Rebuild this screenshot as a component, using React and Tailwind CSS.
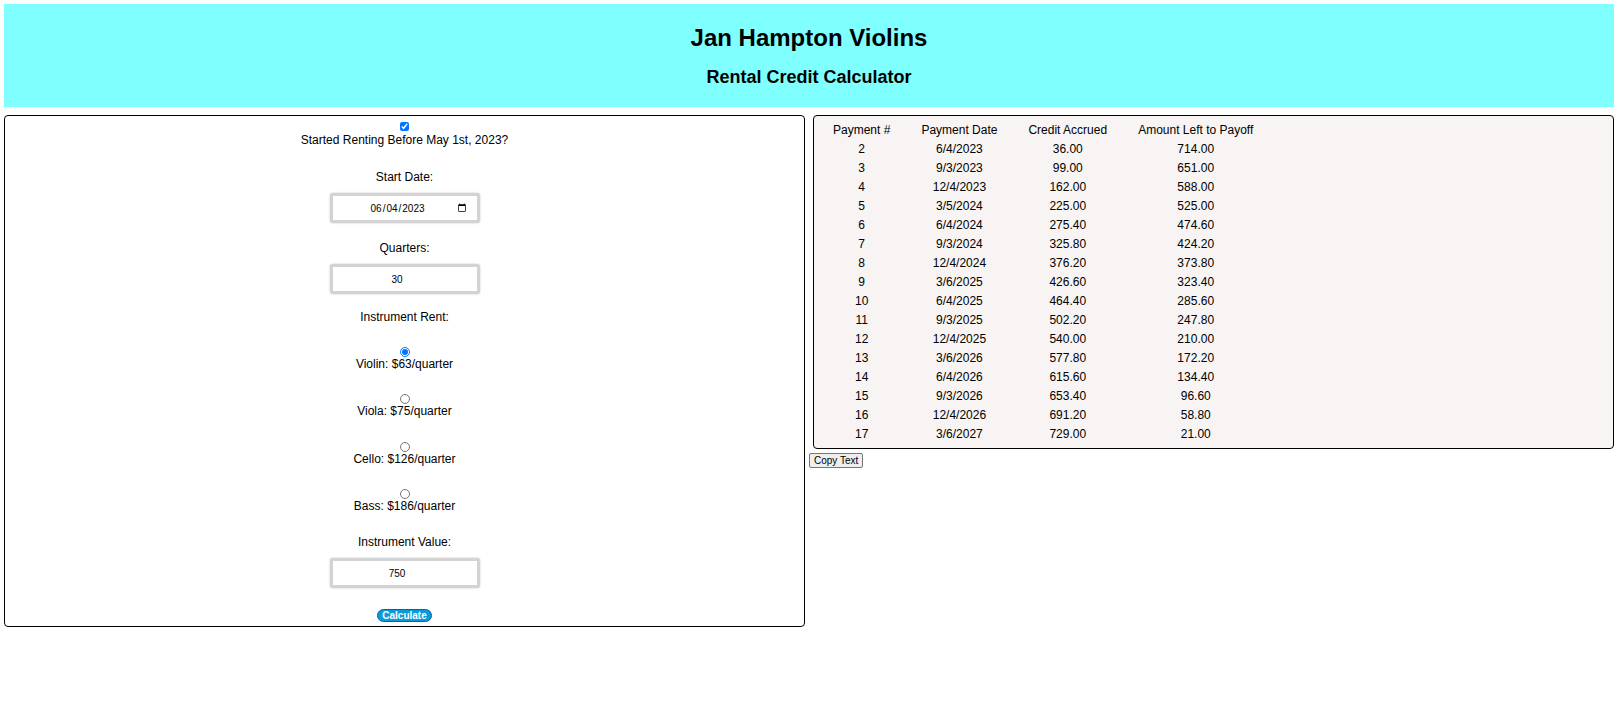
import { useState } from 'react';

const rows = [
  [2, '6/4/2023', '36.00', '714.00'],
  [3, '9/3/2023', '99.00', '651.00'],
  [4, '12/4/2023', '162.00', '588.00'],
  [5, '3/5/2024', '225.00', '525.00'],
  [6, '6/4/2024', '275.40', '474.60'],
  [7, '9/3/2024', '325.80', '424.20'],
  [8, '12/4/2024', '376.20', '373.80'],
  [9, '3/6/2025', '426.60', '323.40'],
  [10, '6/4/2025', '464.40', '285.60'],
  [11, '9/3/2025', '502.20', '247.80'],
  [12, '12/4/2025', '540.00', '210.00'],
  [13, '3/6/2026', '577.80', '172.20'],
  [14, '6/4/2026', '615.60', '134.40'],
  [15, '9/3/2026', '653.40', '96.60'],
  [16, '12/4/2026', '691.20', '58.80'],
  [17, '3/6/2027', '729.00', '21.00'],
];

// mt is per item so the radio stack lands on the same rows as the picture
const instruments = [
  { id: 'violin', label: 'Violin: $63/quarter', mt: 'mt-[23px]' },
  { id: 'viola', label: 'Viola: $75/quarter', mt: 'mt-[23px]' },
  { id: 'cello', label: 'Cello: $126/quarter', mt: 'mt-[24px]' },
  { id: 'bass', label: 'Bass: $186/quarter', mt: 'mt-[23px]' },
];

const inputCls =
  'block mx-auto w-[150px] h-[30px] bg-white border-[3px] border-[#d3d3d3] rounded-[3px] shadow-[0_0_2px_rgba(0,0,0,0.25)] text-[10px] text-black outline-none';

export default function App() {
  const [before, setBefore] = useState(true);
  const [inst, setInst] = useState('violin');

  return (
    <div className="min-h-[724px] bg-white text-black font-['Liberation_Sans',Arial,sans-serif]">
      <div className="mx-[4px] mt-[4px] h-[103px] bg-[#80ffff] flex flex-col items-center pt-[20px]">
        <h1 className="text-[24px] leading-[28px] font-bold">Jan Hampton Violins</h1>
        <h2 className="mt-[14px] text-[18px] leading-[22px] font-bold">Rental Credit Calculator</h2>
      </div>

      <div className="flex items-start mt-[4px]">
        <div className="w-1/2">
          <div className="m-[4px] border border-black rounded-[4px] text-center text-[12px] pb-[2px]">
            <input
              type="checkbox"
              checked={before}
              onChange={(e) => setBefore(e.target.checked)}
              className="block mx-auto mt-[6px] mb-0 w-[9px] h-[9px]"
            />
            <div className="mt-[3px] leading-[13px]">Started Renting Before May 1st, 2023?</div>

            <div className="mt-[23px] leading-[14px]">Start Date:</div>
            <input type="date" defaultValue="2023-06-04" className={inputCls + ' mt-[9px] pl-[37px] pr-[8px]'} />

            <div className="mt-[18px] leading-[14px]">Quarters:</div>
            <input type="number" defaultValue="30" className={inputCls + ' mt-[9px] text-center'} />

            <div className="mt-[16px] leading-[14px]">Instrument Rent:</div>
            {instruments.map((it) => (
              <div key={it.id} className={it.mt}>
                <input
                  type="radio"
                  name="inst"
                  checked={inst === it.id}
                  onChange={() => setInst(it.id)}
                  className="block mx-auto my-0 w-[10px] h-[10px]"
                />
                <div className="leading-[14px]">{it.label}</div>
              </div>
            ))}

            <div className="mt-[22px] leading-[14px]">Instrument Value:</div>
            <input type="number" defaultValue="750" className={inputCls + ' mt-[9px] text-center'} />

            <button className="mt-[21px] h-[13px] px-[4px] rounded-full bg-[#0a9ad9] border border-[#0b5fa6] text-white text-[10px] leading-[10px] font-bold">
              Calculate
            </button>
          </div>
        </div>

        <div className="w-1/2">
          <div className="m-[4px] border border-black rounded-[4px] bg-[#f7f4f3] pt-[4px] px-[3px] pb-[3px]">
            <table className="border-separate border-spacing-x-[1px] border-spacing-y-[2px] text-[12px]">
              <thead>
                <tr>
                  {['Payment #', 'Payment Date', 'Credit Accrued', 'Amount Left to Payoff'].map((h) => (
                    <th key={h} className="font-normal px-[15px] py-[1px] leading-[15px] text-center">{h}</th>
                  ))}
                </tr>
              </thead>
              <tbody>
                {rows.map((r) => (
                  <tr key={r[0]}>
                    {r.map((c, i) => (
                      <td key={i} className="px-[15px] py-[1px] leading-[15px] text-center">{c}</td>
                    ))}
                  </tr>
                ))}
              </tbody>
            </table>
          </div>
          <button className="block text-[10px] leading-[11px] px-[4px] py-[1px] bg-[#efefef] border border-[#767676] rounded-[2px]">
            Copy Text
          </button>
        </div>
      </div>
    </div>
  );
}
